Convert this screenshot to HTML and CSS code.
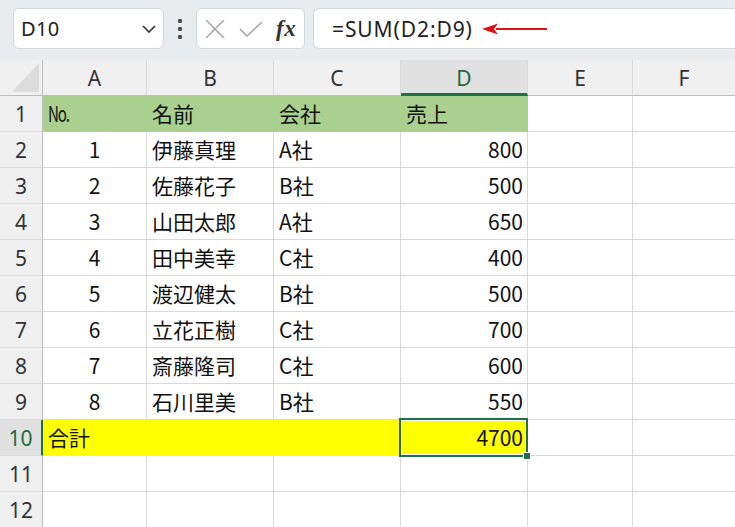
FILE: index.html
```html
<!DOCTYPE html>
<html lang="ja">
<head>
<meta charset="utf-8">
<link rel="stylesheet" href="styles.css">
</head>
<body>
<div class="app">
  <div class="toolbar">
    <div class="namebox">
      <span class="name">D10</span>
      <svg class="chev" width="16" height="10" viewBox="0 0 16 10"><path d="M2 2 L8 8 L14 2" fill="none" stroke="#333" stroke-width="1.6"/></svg>
    </div>
    <div class="dots"><i></i><i></i><i></i></div>
    <div class="fxbox">
      <svg width="20" height="18" viewBox="0 0 20 18"><path d="M1 0 L19 18 M19 0 L1 18" stroke="#a8a8a8" stroke-width="1.6" fill="none"/></svg>
      <svg width="24" height="16" viewBox="0 0 24 16"><path d="M1 8 L8 15 L23 1" stroke="#a8a8a8" stroke-width="1.6" fill="none"/></svg>
      <span class="fx">fx</span>
    </div>
    <div class="formula">
      <span class="ftext">=SUM(D2:D9)</span>
      <svg class="arrow" width="66" height="14" viewBox="0 0 66 14"><path d="M14 7 L65 7" stroke="#e01010" stroke-width="2"/><path d="M0 7 L16 1.5 L12 7 L16 12.5 Z" fill="#e01010"/></svg>
    </div>
  </div>
  <div class="sheet">
    <div class="hd corner"><span class="tri"></span></div>
    <div class="hd col">A</div>
    <div class="hd col">B</div>
    <div class="hd col">C</div>
    <div class="hd col sel">D</div>
    <div class="hd col">E</div>
    <div class="hd col last">F</div>

    <div class="hd row">1</div>
    <div class="c g"><span class="no">No.</span></div><div class="c g">名前</div><div class="c g">会社</div><div class="c g">売上</div><div class="c"></div><div class="c"></div>

    <div class="hd row">2</div>
    <div class="c ctr">1</div><div class="c">伊藤真理</div><div class="c">A社</div><div class="c num">800</div><div class="c"></div><div class="c"></div>
    <div class="hd row">3</div>
    <div class="c ctr">2</div><div class="c">佐藤花子</div><div class="c">B社</div><div class="c num">500</div><div class="c"></div><div class="c"></div>
    <div class="hd row">4</div>
    <div class="c ctr">3</div><div class="c">山田太郎</div><div class="c">A社</div><div class="c num">650</div><div class="c"></div><div class="c"></div>
    <div class="hd row">5</div>
    <div class="c ctr">4</div><div class="c">田中美幸</div><div class="c">C社</div><div class="c num">400</div><div class="c"></div><div class="c"></div>
    <div class="hd row">6</div>
    <div class="c ctr">5</div><div class="c">渡辺健太</div><div class="c">B社</div><div class="c num">500</div><div class="c"></div><div class="c"></div>
    <div class="hd row">7</div>
    <div class="c ctr">6</div><div class="c">立花正樹</div><div class="c">C社</div><div class="c num">700</div><div class="c"></div><div class="c"></div>
    <div class="hd row">8</div>
    <div class="c ctr">7</div><div class="c">斎藤隆司</div><div class="c">C社</div><div class="c num">600</div><div class="c"></div><div class="c"></div>
    <div class="hd row">9</div>
    <div class="c ctr">8</div><div class="c">石川里美</div><div class="c">B社</div><div class="c num">550</div><div class="c"></div><div class="c"></div>

    <div class="hd row rsel">10</div>
    <div class="c y">合計</div><div class="c y"></div><div class="c y"></div><div class="c y num active">4700<span class="handle"></span></div><div class="c"></div><div class="c"></div>

    <div class="hd row">11</div>
    <div class="c"></div><div class="c"></div><div class="c"></div><div class="c"></div><div class="c"></div><div class="c"></div>
    <div class="hd row">12</div>
    <div class="c"></div><div class="c"></div><div class="c"></div><div class="c"></div><div class="c"></div><div class="c"></div>
  </div>
</div>
</body>
</html>
```

FILE: styles.css
```css
* { box-sizing: border-box; }
html, body { margin: 0; padding: 0; background: #fff; }
body { width: 735px; height: 527px; overflow: hidden; font-family: "Noto Sans CJK JP", "Noto Sans", sans-serif; color: #111; }

.toolbar {
  height: 60px;
  background: #e9ecef;
  display: flex;
  align-items: flex-start;
  padding: 8px 0 0 13px;
}
.namebox {
  width: 151px;
  height: 41px;
  background: #fff;
  border: 1px solid #d3d6da;
  border-radius: 6px;
  display: flex;
  align-items: center;
  justify-content: space-between;
  padding: 0 6px 0 7px;
}
.name { font-size: 20px; color: #222; font-family: "Noto Sans", sans-serif; letter-spacing: 0.3px; }
.chev { margin-top: 1px; }
.dots {
  width: 32px;
  height: 41px;
  display: flex;
  flex-direction: column;
  align-items: center;
  justify-content: center;
  gap: 4px;
}
.dots i { width: 4px; height: 4px; background: #505050; border-radius: 1px; display: block; }
.fxbox {
  width: 109px;
  height: 41px;
  background: #fff;
  border: 1px solid #d3d6da;
  border-radius: 6px;
  display: flex;
  align-items: center;
  padding: 0 0 0 8px;
  gap: 14px;
}
.fx {
  font-family: "Liberation Serif", serif;
  font-style: italic;
  font-weight: bold;
  font-size: 23px;
  color: #333;
  margin-left: -1px;
  letter-spacing: 0.5px;
}
.formula {
  flex: 1;
  height: 41px;
  margin-left: 8px;
  background: #fff;
  border: 1px solid #d3d6da;
  border-right: none;
  border-radius: 6px 0 0 6px;
  display: flex;
  align-items: center;
  padding-left: 18px;
}
.ftext { font-size: 21px; color: #222; font-family: "Noto Sans", sans-serif; letter-spacing: 0.9px; }
.arrow { margin-left: 9px; margin-top: 1px; }

.sheet {
  display: grid;
  grid-template-columns: 43px 104px 127px 127px 127px 105px 1fr;
  grid-auto-rows: 36px;
}
.hd {
  background: #f0f0f0;
  color: #333;
  font-family: "Noto Sans", sans-serif;
  font-size: 21px;
  display: flex;
  align-items: center;
  justify-content: center;
}
.col { border-bottom: 1px solid #bdbdbd; border-right: 1px solid #dadada; }
.col.last { border-right: none; }
.col.sel { background: #e1e1e1; color: #1d6b40; border-bottom: 3px solid #1e7145; padding-top: 2px; }
.corner { border-right: 1px solid #bdbdbd; border-bottom: 1px solid #bdbdbd; position: relative; }
.tri {
  position: absolute;
  left: 12px; top: 3px;
  width: 27px; height: 29px;
  background: #dcdcdc;
  clip-path: polygon(100% 0, 100% 100%, 0 100%);
}
.row { border-right: 1px solid #bdbdbd; border-bottom: 1px solid #dadada; }
.row.rsel { background: #e1e1e1; color: #1d6b40; border-right: 2px solid #1e7145; }

.c {
  border-right: 1px solid #d9d9d9;
  border-bottom: 1px solid #d9d9d9;
  font-size: 21px;
  line-height: 34px;
  padding: 0 4px 0 5px;
  white-space: nowrap;
  overflow: hidden;
  color: #111;
}
.c:nth-child(7n) { border-right: none; }
.ctr { text-align: center; padding: 0; }
.num { text-align: right; }
.no { display: inline-block; transform: scaleX(0.72); transform-origin: left center; letter-spacing: -1.5px; }
.g { background: #a9d08e; border-color: #a9d08e; }
.y { background: #ffff00; border-color: #ffff00; }
.active { position: relative; overflow: visible; }
.active::after {
  content: "";
  position: absolute;
  left: -2px; top: -2px; right: -1px; bottom: -2px;
  border: 2px solid #1e7145;
  box-shadow: inset 0 0 0 1px #fff;
  pointer-events: none;
}
.handle {
  position: absolute;
  right: -4px; bottom: -5px;
  width: 8px; height: 8px;
  background: #1e7145;
  border: 1px solid #fff;
  z-index: 2;
}
```
